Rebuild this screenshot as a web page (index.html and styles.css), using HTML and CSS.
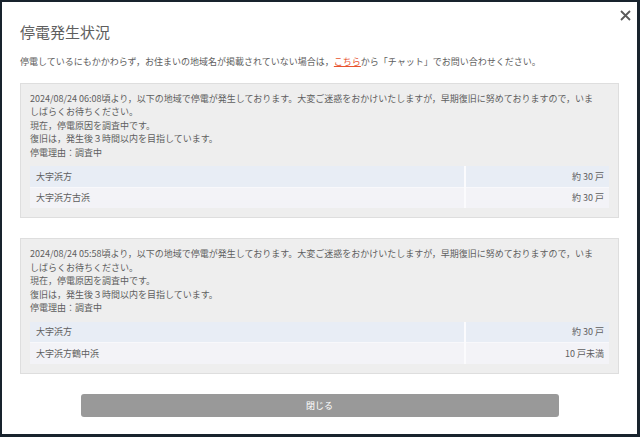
FILE: index.html
```html
<!DOCTYPE html>
<html lang="ja">
  <head>
    <meta charset="UTF-8" />
    <meta name="viewport" content="width=device-width, initial-scale=1.0" />
    <title>停電発生状況</title>
    <link rel="stylesheet" href="styles.css">
  </head>
  <body>
    <div class="modal">
      <button class="close-btn" aria-label="閉じる">
        <svg width="11" height="11" viewBox="0 0 11 11">
          <path d="M1 1 L10 10 M10 1 L1 10" stroke="#5a5a5a" stroke-width="1.8" fill="none" />
        </svg>
      </button>
      <h2 class="modal-title">停電発生状況</h2>
      <p class="intro">
        停電しているにもかかわらず，お住まいの地域名が掲載されていない場合は，<a href="#">こちら</a>から「チャット」でお問い合わせください。
      </p>

      <div class="outage">
        <p>2024/08/24 06:08頃より，以下の地域で停電が発生しております。大変ご迷惑をおかけいたしますが，早期復旧に努めておりますので，いましばらくお待ちください。<br>現在，停電原因を調査中です。<br>復旧は，発生後３時間以内を目指しています。<br>停電理由：調査中</p>
        <table>
          <tr>
            <td>大字浜方</td>
            <td class="count">約 30 戸</td>
          </tr>
          <tr>
            <td>大字浜方古浜</td>
            <td class="count">約 30 戸</td>
          </tr>
        </table>
      </div>

      <div class="outage">
        <p>2024/08/24 05:58頃より，以下の地域で停電が発生しております。大変ご迷惑をおかけいたしますが，早期復旧に努めておりますので，いましばらくお待ちください。<br>現在，停電原因を調査中です。<br>復旧は，発生後３時間以内を目指しています。<br>停電理由：調査中</p>
        <table>
          <tr>
            <td>大字浜方</td>
            <td class="count">約 30 戸</td>
          </tr>
          <tr>
            <td>大字浜方鶴中浜</td>
            <td class="count">10 戸未満</td>
          </tr>
        </table>
      </div>

      <button class="button">閉じる</button>
    </div>
  </body>
</html>
```

FILE: styles.css
```css
body {
  font-family: "Noto Sans CJK JP", "Noto Sans", sans-serif;
  margin: 0;
  padding: 2px;
  background-color: #18232d;
  color: #5e5e5e;
}
.modal {
  position: relative;
  width: 635px;
  height: 432px;
  box-sizing: border-box;
  padding: 20px 18px 0 18px;
  background-color: #fff;
}
.close-btn {
  position: absolute;
  top: 8px;
  right: 6px;
  padding: 0;
  border: none;
  background: none;
  width: 11px;
  height: 11px;
  cursor: pointer;
}
.close-btn svg {
  display: block;
}
.modal-title {
  margin: 0;
  font-size: 15px;
  font-weight: normal;
  line-height: 20px;
  color: #5e5e5e;
}
.intro {
  margin: 13px 0 14px 0;
  font-size: 9px;
  line-height: 13.5px;
}
.intro a {
  color: #e8532f;
  text-decoration: underline;
}
.outage {
  background-color: #eee;
  border: 1px solid #dedede;
  padding: 8px 9px 9px 9px;
  margin-bottom: 20px;
}
.outage p {
  margin: 0;
  padding-right: 7px;
  font-size: 9px;
  line-height: 13.5px;
}
table {
  width: 100%;
  border-collapse: collapse;
  margin-top: 7px;
  font-size: 9px;
}
td {
  height: 21px;
  padding: 0 5px 0 6px;
  box-sizing: border-box;
}
tr:nth-child(odd) td {
  background-color: #e8edf5;
}
tr:nth-child(even) td {
  background-color: #f3f3f7;
}
tr + tr td {
  border-top: 1px solid #f8f8fb;
}
td.count {
  width: 144px;
  text-align: right;
  border-left: 2px solid #fbfbfd;
}
.button {
  display: block;
  width: 478px;
  height: 23px;
  margin: 0 auto;
  padding: 0;
  border: none;
  border-radius: 3px;
  background-color: #999;
  color: #fff;
  font-family: inherit;
  font-size: 9px;
  cursor: pointer;
}
```
